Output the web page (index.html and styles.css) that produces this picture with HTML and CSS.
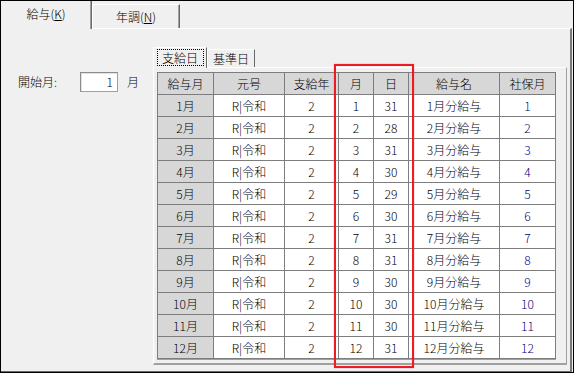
FILE: index.html
```html
<!DOCTYPE html>
<html lang="ja">
<head>
  <meta charset="UTF-8">
  <title>給与</title>
  <link rel="stylesheet" href="styles.css">
</head>
<body>

<div class="window">

  <!-- top tabs -->
  <div class="tabbar">
    <div class="tab active">給与(<u>K</u>)</div>
    <div class="tab">年調(<u>N</u>)</div>
  </div>

  <div class="panel">

    <div class="start">
      <span class="start-label">開始月:</span>
      <div class="input">1</div>
      <span class="start-unit">月</span>
    </div>

    <div class="sub">
      <div class="subtabs">
        <div class="subtab current"><span class="focus">支給日</span></div>
        <div class="subtab">基準日</div>
      </div>

      <div class="subpanel">
        <div class="grid">
          <div class="cell head">給与月</div>
          <div class="cell head">元号</div>
          <div class="cell head">支給年</div>
          <div class="cell head">月</div>
          <div class="cell head">日</div>
          <div class="cell head">給与名</div>
          <div class="cell head">社保月</div>

          <div class="cell side">1月</div><div class="cell">R|令和</div><div class="cell">2</div><div class="cell">1</div><div class="cell">31</div><div class="cell">1月分給与</div><div class="cell blue">1</div>
          <div class="cell side">2月</div><div class="cell">R|令和</div><div class="cell">2</div><div class="cell">2</div><div class="cell">28</div><div class="cell">2月分給与</div><div class="cell blue">2</div>
          <div class="cell side">3月</div><div class="cell">R|令和</div><div class="cell">2</div><div class="cell">3</div><div class="cell">31</div><div class="cell">3月分給与</div><div class="cell blue">3</div>
          <div class="cell side">4月</div><div class="cell">R|令和</div><div class="cell">2</div><div class="cell">4</div><div class="cell">30</div><div class="cell">4月分給与</div><div class="cell blue">4</div>
          <div class="cell side">5月</div><div class="cell">R|令和</div><div class="cell">2</div><div class="cell">5</div><div class="cell">29</div><div class="cell">5月分給与</div><div class="cell blue">5</div>
          <div class="cell side">6月</div><div class="cell">R|令和</div><div class="cell">2</div><div class="cell">6</div><div class="cell">30</div><div class="cell">6月分給与</div><div class="cell blue">6</div>
          <div class="cell side">7月</div><div class="cell">R|令和</div><div class="cell">2</div><div class="cell">7</div><div class="cell">31</div><div class="cell">7月分給与</div><div class="cell blue">7</div>
          <div class="cell side">8月</div><div class="cell">R|令和</div><div class="cell">2</div><div class="cell">8</div><div class="cell">31</div><div class="cell">8月分給与</div><div class="cell blue">8</div>
          <div class="cell side">9月</div><div class="cell">R|令和</div><div class="cell">2</div><div class="cell">9</div><div class="cell">30</div><div class="cell">9月分給与</div><div class="cell blue">9</div>
          <div class="cell side">10月</div><div class="cell">R|令和</div><div class="cell">2</div><div class="cell">10</div><div class="cell">30</div><div class="cell">10月分給与</div><div class="cell blue">10</div>
          <div class="cell side">11月</div><div class="cell">R|令和</div><div class="cell">2</div><div class="cell">11</div><div class="cell">30</div><div class="cell">11月分給与</div><div class="cell blue">11</div>
          <div class="cell side">12月</div><div class="cell">R|令和</div><div class="cell">2</div><div class="cell">12</div><div class="cell">31</div><div class="cell">12月分給与</div><div class="cell blue">12</div>
        </div>
      </div>
    </div>

  </div>

  <!-- red highlight over 月 / 日 columns -->
  <div class="highlight"></div>
</div>

</body>
</html>
```

FILE: styles.css
```css
body {
  margin: 0;
  padding: 0;
  font-family: "Noto Sans CJK JP", "Noto Sans", sans-serif;
  font-size: 12px;
  font-weight: 300;
  color: #000;
}

.window {
  position: relative;
  width: 574px;
  height: 373px;
  box-sizing: border-box;
  border: 1px solid #000;
  background: #f0f0f0;
  display: flex;
  flex-direction: column;
}

/* Top tabs */
.tabbar {
  height: 27px;
  display: flex;
  align-items: flex-end;
}

.tab {
  box-sizing: border-box;
  height: 24px;
  width: 88px;
  display: flex;
  justify-content: center;
  align-items: center;
  border-top: 1px solid #fff;
  border-left: 1px solid #fff;
  border-right: 1px solid #696969;
  box-shadow: inset -1px 0 0 #a0a0a0;
  line-height: 1;
  padding-top: 1px;
}

.tab.active {
  width: 91px;
  height: 28px;
  margin-bottom: -1px;
  border-top: none;
  border-left: none;
  background: #f0f0f0;
  position: relative;
  z-index: 1;
  padding-top: 0;
  padding-bottom: 2px;
}

.tab u {
  text-decoration: underline;
  text-underline-offset: 1px;
}

.panel {
  flex: 1;
  display: flex;
  border-top: 1px solid #fff;
  border-right: 2px solid #7a7a7a;
  border-bottom: 1px solid #696969;
  margin-right: 1px;
  padding-top: 18px;
  padding-bottom: 6px;
}

/* 開始月 */
.start {
  width: 152px;
  box-sizing: border-box;
  padding: 25px 0 0 17px;
  display: flex;
  align-items: flex-start;
}

.start-label {
  width: 62px;
  line-height: 20px;
}

.input {
  width: 38px;
  height: 20px;
  box-sizing: border-box;
  background: #fff;
  border: 1px solid #a0a0a0;
  border-top-color: #8c8c8c;
  border-left-color: #8c8c8c;
  box-shadow: inset 1px 1px 0 #e3e3e3;
  text-align: right;
  padding-right: 4px;
  line-height: 18px;
}

.start-unit {
  margin-left: 9px;
  line-height: 20px;
}

/* Inner tab control */
.sub {
  flex: 1;
  display: flex;
  flex-direction: column;
  margin-right: 3px;
}

.subtabs {
  height: 20px;
  display: flex;
  align-items: flex-end;
}

.subtab {
  box-sizing: border-box;
  width: 48px;
  height: 18px;
  display: flex;
  justify-content: center;
  align-items: center;
  border-top: 1px solid #fff;
  border-left: 1px solid #fff;
  border-right: 1px solid #696969;
  line-height: 1;
}

.subtab.current {
  width: 54px;
  height: 21px;
  margin-bottom: -1px;
  padding-bottom: 2px;
  background: #f0f0f0;
  position: relative;
  z-index: 1;
}

.focus {
  width: 45px;
  box-sizing: border-box;
  text-align: center;
  padding: 2px 0 1px;
  outline: 1px dotted #000;
}

.subpanel {
  flex: 1;
  border-top: 1px solid #fff;
  border-left: 1px solid #fff;
  border-right: 1px solid #a0a0a0;
  border-bottom: 2px solid #a0a0a0;
  padding: 4px 0 0 3px;
}

/* Grid */
.grid {
  display: grid;
  grid-template-columns: 55px 70px 53px 34px 34px 90px 55px;
  grid-auto-rows: 21px;
  gap: 1px;
  padding: 1px;
  background: #7d7d7d;
  width: max-content;
  box-shadow: 0 1px 0 #a0a0a0;
}

.cell {
  background: #fff;
  text-align: center;
  line-height: 21px;
  white-space: nowrap;
}

.cell.head,
.cell.side {
  background: #d7d7d7;
}

.cell.blue {
  color: #000078;
}

/* Annotation */
.highlight {
  position: absolute;
  left: 333px;
  top: 63px;
  width: 76px;
  height: 300px;
  border: 2px solid #ec1c24;
  box-shadow: 0 0 1px rgba(236, 28, 36, 0.6);
  pointer-events: none;
}
```
